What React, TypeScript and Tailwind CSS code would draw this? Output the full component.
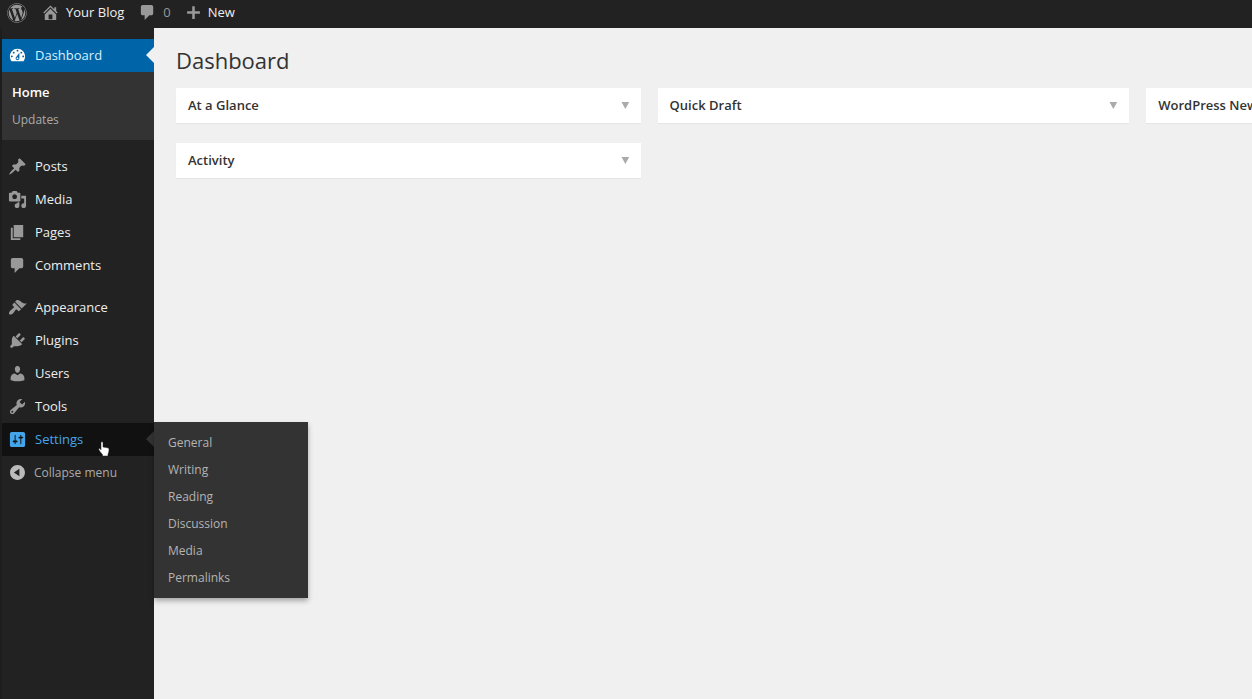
import { useState } from 'react'
import type { ReactNode } from 'react'
import { FaWordpress } from 'react-icons/fa'
import clsx from 'clsx'

const ICONS = {
  home: 'M16 8.5l1.53 1.53-1.06 1.06L10 4.6l-6.47 6.49-1.06-1.06L10 2.5l4 4v-2h2v4zm-6-2.46l6 5.99V18H4v-5.97zM12 17v-5H8v5h4z',
  dashboard:
    'M3.76 16h12.48c1.1-1.37 1.76-3.11 1.76-5 0-4.42-3.58-8-8-8s-8 3.58-8 8c0 1.89.66 3.63 1.76 5zM10 4c.55 0 1 .45 1 1s-.45 1-1 1-1-.45-1-1 .45-1 1-1zM6 6c.55 0 1 .45 1 1s-.45 1-1 1-1-.45-1-1 .45-1 1-1zm8 0c.55 0 1 .45 1 1s-.45 1-1 1-1-.45-1-1 .45-1 1-1zm-5.37 5.55L12 7v6c0 1.1-.9 2-2 2s-2-.9-2-2c0-.57.24-1.08.63-1.45zM4 10c.55 0 1 .45 1 1s-.45 1-1 1-1-.45-1-1 .45-1 1-1zm12 0c.55 0 1 .45 1 1s-.45 1-1 1-1-.45-1-1 .45-1 1-1zm-5 3c0-.55-.45-1-1-1s-1 .45-1 1 .45 1 1 1 1-.45 1-1z',
  post: 'M10.44 3.02l1.82-1.82 6.36 6.35-1.83 1.82c-1.05-.68-2.48-.57-3.41.36l-.75.75c-.92.93-1.04 2.35-.35 3.41l-1.83 1.82-2.41-2.41-2.8 2.79c-.42.42-3.38 2.71-3.8 2.29s1.86-3.39 2.28-3.81l2.79-2.79L4.1 9.36l1.83-1.82c1.05.69 2.48.57 3.4-.36l.75-.75c.93-.92 1.05-2.35.36-3.41z',
  media:
    'M13 11V4c0-.55-.45-1-1-1h-1.67L9 1H5L3.67 3H2c-.55 0-1 .45-1 1v7c0 .55.45 1 1 1h10c.55 0 1-.45 1-1zM7 4.5c1.38 0 2.5 1.12 2.5 2.5S8.38 9.5 7 9.5 4.5 8.38 4.5 7 5.62 4.5 7 4.5zM14 6h5v10.5c0 1.38-1.12 2.5-2.5 2.5S14 17.88 14 16.5s1.12-2.5 2.5-2.5c.17 0 .34.02.5.05V9h-3V6zm-4 8.05V13h2v3.5c0 1.38-1.12 2.5-2.5 2.5S7 17.88 7 16.5 8.12 14 9.5 14c.17 0 .34.02.5.05z',
  page: 'M6 15V2h10v13H6zm-1 1h8v2H3V5h2v11z',
  comments:
    'M5 2h9c1.1 0 2 .9 2 2v7c0 1.1-.9 2-2 2h-2l-5 5v-5H5c-1.1 0-2-.9-2-2V4c0-1.1.9-2 2-2z',
  appearance:
    'M14.48 11.06L7.41 3.99l1.5-1.5c.5-.56 2.3-.47 3.51.32 1.21.8 1.43 1.28 2.91 2.1 1.18.64 2.45 1.26 4.45.85zm-.71.71L6.7 4.7 4.93 6.47c-.39.39-.39 1.02 0 1.41l1.06 1.06c.39.39.39 1.03 0 1.42-.6.6-1.43 1.11-2.21 1.69-.35.26-.7.53-1.01.84C1.43 14.23.4 16.08 1.4 17.07c.99 1 2.84-.03 4.18-1.36.31-.31.58-.66.85-1.02.57-.78 1.08-1.61 1.69-2.21.39-.39 1.02-.39 1.41 0l1.06 1.06c.39.39 1.02.39 1.41 0z',
  plugins:
    'M13.11 4.36L9.87 7.6 8 5.73l3.24-3.24c.35-.34 1.05-.2 1.56.32.52.51.66 1.21.31 1.55zm-8 1.77l.91-1.12 9.01 9.01-1.19.84c-.71.71-2.63 1.16-3.82 1.16H6.14L4.9 17.26c-.59.59-1.54.59-2.12 0-.59-.58-.59-1.53 0-2.12l1.24-1.24v-3.88c0-1.13.4-3.19 1.09-3.89zm7.26 3.97l3.24-3.24c.34-.35 1.04-.21 1.55.31.52.51.66 1.21.31 1.55l-3.24 3.25z',
  users:
    'M10 9.25c-2.27 0-2.73-3.44-2.73-3.44C7 4.02 7.82 2 9.97 2c2.16 0 2.98 2.02 2.71 3.81 0 0-.41 3.44-2.68 3.44zm0 2.57L12.72 10c2.39 0 4.52 2.33 4.52 4.53v2.49s-3.65 1.13-7.24 1.13c-3.65 0-7.24-1.13-7.24-1.13v-2.49c0-2.25 1.94-4.48 4.47-4.48z',
  tools:
    'M16.68 9.77c-1.34 1.34-3.3 1.67-4.95.99l-5.41 6.52c-.99.99-2.59.99-3.58 0s-.99-2.59 0-3.57l6.52-5.42c-.68-1.65-.35-3.61.99-4.95 1.28-1.28 3.12-1.62 4.72-1.06l-2.89 2.89 2.82 2.82 2.86-2.87c.53 1.58.18 3.39-1.08 4.65zM3.81 16.21c.4.39 1.04.39 1.43 0 .4-.4.4-1.04 0-1.43-.39-.4-1.03-.4-1.43 0-.39.39-.39 1.03 0 1.43z',
  settings:
    'M18 16V4c0-1.1-.9-2-2-2H4c-1.1 0-2 .9-2 2v12c0 1.1.9 2 2 2h12c1.1 0 2-.9 2-2zM8 11h1c.55 0 1 .45 1 1s-.45 1-1 1H8v1.5c0 .28-.22.5-.5.5s-.5-.22-.5-.5V13H6c-.55 0-1-.45-1-1s.45-1 1-1h1V5.5c0-.28.22-.5.5-.5s.5.22.5.5V11zm5-2h-1c-.55 0-1-.45-1-1s.45-1 1-1h1V5.5c0-.28.22-.5.5-.5s.5.22.5.5V7h1c.55 0 1 .45 1 1s-.45 1-1 1h-1v5.5c0 .28-.22.5-.5.5s-.5-.22-.5-.5V9z',
  collapse:
    'M10 2.16c4.33 0 7.84 3.51 7.84 7.84s-3.51 7.84-7.84 7.84S2.16 14.33 2.16 10 5.71 2.16 10 2.16zm2 11.72V6.12L6.18 9.97z',
  plus: 'M17.5 8.5v3h-6v6h-3v-6h-6v-3h6v-6h3v6h6z',
  arrow: 'M15.5 6l-4.5 8L6.500 6h9z',
}

type IconName = keyof typeof ICONS

function Icon({ name, className }: { name: IconName; className?: string }) {
  return (
    <svg viewBox="0 0 20 20" fill="currentColor" fillRule="evenodd" aria-hidden="true" className={clsx('shrink-0', className)}>
      <path d={ICONS[name]} />
    </svg>
  )
}

const contentItems: { label: string; icon: IconName }[] = [
  { label: 'Posts', icon: 'post' },
  { label: 'Media', icon: 'media' },
  { label: 'Pages', icon: 'page' },
  { label: 'Comments', icon: 'comments' },
]

const siteItems: { label: string; icon: IconName }[] = [
  { label: 'Appearance', icon: 'appearance' },
  { label: 'Plugins', icon: 'plugins' },
  { label: 'Users', icon: 'users' },
  { label: 'Tools', icon: 'tools' },
]

const settingsItems = ['General', 'Writing', 'Reading', 'Discussion', 'Media', 'Permalinks']

function AdminBar() {
  return (
    <header className="flex h-7 items-center bg-[#222] pb-[3px] pl-[7px] text-[13px] font-medium text-[#eee]">
      <a href="#" aria-label="About WordPress" className="mr-3.5 text-[#999]">
        <FaWordpress className="size-5" />
      </a>
      <a href="#" className="mr-3.5 flex items-center gap-1.5">
        <Icon name="home" className="size-[19px] text-[#999]" />
        Your Blog
      </a>
      <a href="#" className="mr-3.5 flex items-center gap-1.5 font-normal text-[#999]">
        <Icon name="comments" className="size-[19px]" />
        0
      </a>
      <a href="#" className="flex items-center gap-1.5">
        <Icon name="plus" className="size-[17px] text-[#999]" />
        New
      </a>
    </header>
  )
}

function MenuItem({ label, icon }: { label: string; icon: IconName }) {
  return (
    <li>
      <a href="#" className="flex h-[33px] items-center gap-2 pl-1.5 text-[#eee]">
        <Icon name={icon} className="size-[19px] text-[#999]" />
        {label}
      </a>
    </li>
  )
}

function SettingsItem() {
  return (
    <li className="relative">
      <a href="#" className="flex h-[33px] items-center gap-2 bg-[#111] pl-1.5 text-[#45a5ea]">
        <Icon name="settings" className="size-[19px]" />
        Settings
      </a>
      <span className="absolute top-2 right-0 border-8 border-l-0 border-transparent border-r-[#333]" />
      <ul className="absolute -top-px left-full z-10 w-[154px] bg-[#333] py-[7px] text-xs shadow-[0_3px_5px_rgba(0,0,0,0.3)]">
        {settingsItems.map((item) => (
          <li key={item}>
            <a href="#" className="flex h-[27px] items-center pl-3.5 text-[#b4b4b4]">
              {item}
            </a>
          </li>
        ))}
      </ul>
      {/* Hand pointer */}
      <svg viewBox="0 0 12 16" className="absolute top-[18px] left-24 h-4 w-3" aria-hidden="true">
        <path
          d="M3 1.5C3 .6 5 .6 5 1.5V6l4.5.8c1 .2 1.5.8 1.5 1.7 0 2-.4 3.5-1 4.6V15H4.500v-1.500C3 12 1.500 10 .8 8.600c-.3-.9.8-1.300 1.400-.7l.8.9z"
          fill="#fff"
          stroke="#222"
          strokeWidth="0.5"
        />
      </svg>
    </li>
  )
}

function Sidebar() {
  return (
    <nav className="w-[154px] shrink-0 border-l-2 border-[#1d1d1d] bg-[#222] pt-[11px] text-[13px] font-medium">
      <ul>
        <li>
          <a href="#" className="relative flex h-[33px] items-center gap-2 bg-[#0064a8] pl-1.5 text-[#d8f0ff]">
            <Icon name="dashboard" className="size-[19px] text-white" />
            Dashboard
            <span className="absolute top-2 right-0 border-8 border-l-0 border-transparent border-r-[#f0f0f0]" />
          </a>
          <ul className="bg-[#333] py-[7px] text-xs">
            <li>
              <a href="#" className="flex h-[27px] items-center pl-2.5 text-[13px] font-semibold text-white">
                Home
              </a>
            </li>
            <li>
              <a href="#" className="flex h-[27px] items-center pl-2.5 text-[#aaa]">
                Updates
              </a>
            </li>
          </ul>
        </li>
      </ul>
      <ul className="mt-2.5">
        {contentItems.map((item) => (
          <MenuItem key={item.label} {...item} />
        ))}
      </ul>
      <ul className="mt-[9px]">
        {siteItems.map((item) => (
          <MenuItem key={item.label} {...item} />
        ))}
        <SettingsItem />
        <li>
          <button type="button" className="flex h-[33px] w-full items-center gap-[7px] pl-1.5 text-xs text-[#aaa]">
            <Icon name="collapse" className="size-[19px] text-[#bbb]" />
            Collapse menu
          </button>
        </li>
      </ul>
    </nav>
  )
}

function Widget({ title, children }: { title: string; children?: ReactNode }) {
  const [open, setOpen] = useState(false)

  return (
    <section className="bg-white shadow-[0_1px_1px_rgba(0,0,0,0.04)]">
      <h2>
        <button
          type="button"
          aria-expanded={open}
          onClick={() => setOpen(!open)}
          className="flex h-[35px] w-full items-center justify-between pr-2 pl-3 text-[13px] font-semibold text-[#333]"
        >
          {title}
          <Icon name="arrow" className="size-[17px] text-[#aaa]" />
        </button>
      </h2>
      {open && children}
    </section>
  )
}

export default function App() {
  return (
    <div className="flex min-h-screen flex-col overflow-hidden bg-[#f0f0f0] font-['Open_Sans',sans-serif]">
      <AdminBar />
      <div className="flex flex-1">
        <Sidebar />
        <main className="min-w-0 flex-1 pt-4 pl-[22px]">
          <h1 className="text-[22px] leading-8 text-[#333]">Dashboard</h1>
          {/* Widget columns run wider than the window */}
          <div className="mt-3 grid w-[134%] grid-cols-[465fr_472fr_472fr] items-start gap-x-[17px]">
            <div className="grid gap-5">
              <Widget title="At a Glance" />
              <Widget title="Activity" />
            </div>
            <Widget title="Quick Draft" />
            <Widget title="WordPress News" />
          </div>
        </main>
      </div>
    </div>
  )
}
